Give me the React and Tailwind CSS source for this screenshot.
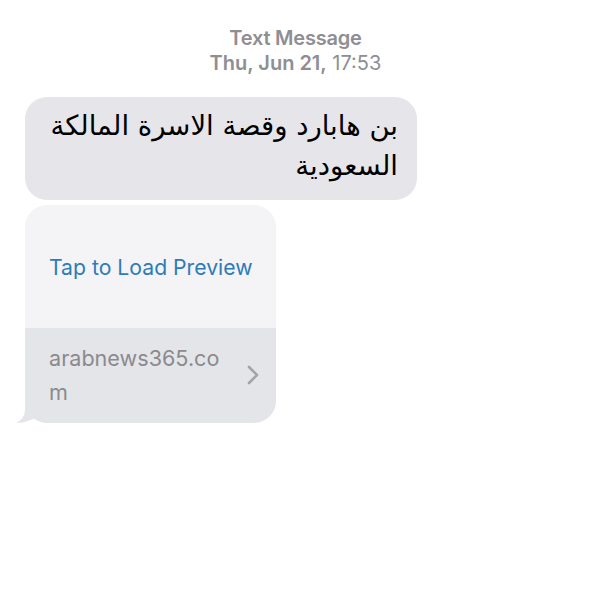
import React from 'react'

const sf = { fontFamily: 'Inter, "Liberation Sans", sans-serif' }

function Chevron() {
    return (
        <svg width="14" height="22" viewBox="0 0 14 22" fill="none">
            <path d="M3 3 L11 11 L3 19" stroke="#a3a3a8" strokeWidth="2.6" strokeLinecap="round" strokeLinejoin="round" />
        </svg>
    )
}

function Tail() {
    // little hook on the bottom-left corner of the received bubble
    return (
        <svg className="absolute left-[-9px] bottom-0" width="40" height="26" viewBox="0 0 40 26">
            <path d="M9 0 L9 12 Q9 22 0 26 Q10 26 19 21 Q24 26 34 26 L34 0 Z" fill="#e4e5e9" />
        </svg>
    )
}

export default function App() {
    return (
        <div className="w-[591px] h-[591px] bg-white overflow-hidden" style={sf}>
            {/* header */}
            <div className="pt-[26px] flex flex-col items-center text-[20px] leading-[25px] text-[#8e8e93]">
                <div className="font-semibold tracking-[-0.2px]">Text Message</div>
                <div>
                    <span className="font-semibold">Thu, Jun 21,</span> 17:53
                </div>
            </div>

            <div className="pl-[25px] mt-[21px] flex flex-col gap-[5px]">
                {/* arabic text bubble */}
                <div
                    dir="rtl"
                    className="w-[392px] rounded-[22px] bg-[#e5e5ea] pr-[19px] pl-4 pt-[8px] pb-[15px] text-right text-[27.5px] leading-[40px] text-black"
                    style={{ fontFamily: '"DejaVu Sans", "Noto Sans", sans-serif' }}
                >
                    بن هابارد وقصة الاسرة المالكة
                    <br />
                    السعودية
                </div>

                {/* link preview bubble */}
                <div className="relative w-[251px]">
                    <div className="rounded-[22px] overflow-hidden">
                        <div className="h-[123px] bg-[#f4f4f6] flex items-center pl-[24px] pt-[3px]">
                            <span className="text-[21.2px] text-[#2d7bb9]">Tap to Load Preview</span>
                        </div>
                        <div className="h-[95px] bg-[#e4e5e9] flex items-center justify-between pl-[24px] pr-[16px] pb-[2px]">
                            <div className="text-[21.6px] leading-[34px] text-[#8a8a8f]">
                                arabnews365.co
                                <br />
                                m
                            </div>
                            <Chevron />
                        </div>
                    </div>
                    <Tail />
                </div>
            </div>
        </div>
    )
}
